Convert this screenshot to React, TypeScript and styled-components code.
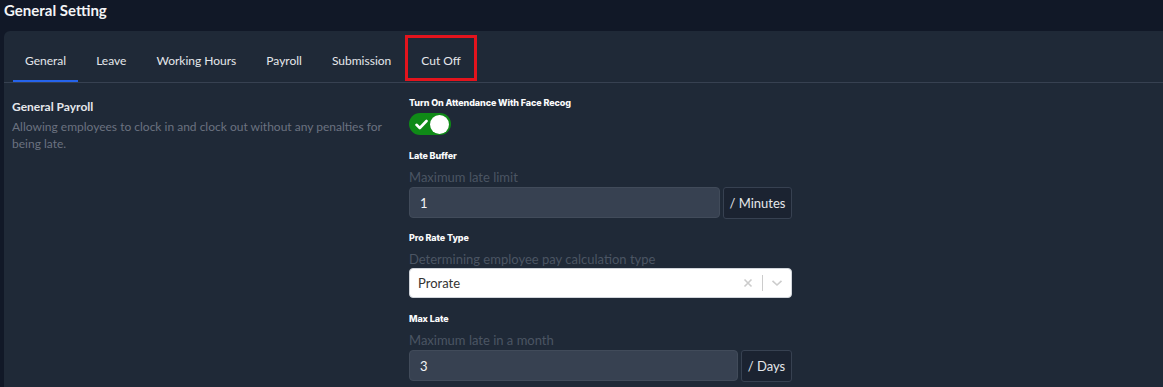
import React from 'react';
import styled, { createGlobalStyle, css } from 'styled-components';

const GlobalStyle = createGlobalStyle`
  html, body {
    margin: 0;
    padding: 0;
    background: #111827;
    overflow: hidden;
  }
  body {
    font-family: Lato, "Noto Sans", sans-serif;
    color: #e5e7eb;
  }
`;

const Page = styled.div`
  width: 1163px;
  height: 387px;
  overflow: hidden;
`;

const PageTitle = styled.h1`
  margin: 0;
  padding: 0 0 0 4px;
  height: 31px;
  font-size: 15px;
  font-weight: 700;
  line-height: 20px;
  color: #f3f4f6;
`;

const Card = styled.div`
  margin-left: 4px;
  width: 1180px;
  min-height: 400px;
  background: #1f2937;
  border-radius: 6px 0 0 0;
`;

const TabBar = styled.div`
  display: flex;
  gap: 6px;
  padding: 5px 0 0 9px;
  border-bottom: 1px solid #374151;
`;

const Tab = styled.button<{ $active?: boolean; $marked?: boolean }>`
  position: relative;
  height: 46px;
  padding: 5px 12px 0;
  background: transparent;
  border: none;
  border-bottom: 2px solid ${({ $active }) => ($active ? '#2563eb' : 'transparent')};
  font-family: Lato, "Noto Sans", sans-serif;
  font-size: 12px;
  color: #e5e7eb;
  cursor: pointer;

  ${({ $marked }) =>
    $marked &&
    css`
      &::after {
        content: '';
        position: absolute;
        top: -1px;
        bottom: -1px;
        left: -4px;
        right: -4px;
        border: 3px solid #e3141d;
      }
    `}
`;

const Content = styled.div`
  display: grid;
  grid-template-columns: 397px 383px;
  padding-left: 8px;
`;

const Intro = styled.div`
  padding-top: 16px;
`;

const SectionTitle = styled.div`
  font-size: 12px;
  font-weight: 700;
  line-height: 16px;
  color: #e5e7eb;
`;

const SectionText = styled.p`
  margin: 3px 0 0;
  width: 385px;
  font-size: 12px;
  line-height: 17px;
  color: #6b7280;
`;

const Fields = styled.div`
  width: 383px;
  display: flex;
  flex-direction: column;
  padding-top: 13px;
`;

const Field = styled.div<{ $gap?: number }>`
  display: flex;
  flex-direction: column;
  margin-bottom: ${({ $gap = 12 }) => $gap}px;
`;

const Label = styled.div`
  font-family: Inter, "Noto Sans", sans-serif;
  font-size: 9px;
  font-weight: 800;
  line-height: 14px;
  color: #f9fafb;
  letter-spacing: -0.1px;
`;

const Hint = styled.div`
  margin-top: 5px;
  font-size: 13px;
  line-height: 18px;
  color: #4b5563;
`;

const Toggle = styled.div`
  margin-top: 3px;
  width: 42px;
  height: 22px;
  border-radius: 11px;
  background: #0f8a17;
  display: flex;
  align-items: center;
  justify-content: space-between;
  padding: 0 2px 0 6px;
  box-sizing: border-box;
`;

const Knob = styled.span`
  width: 19px;
  height: 19px;
  border-radius: 50%;
  background: #ffffff;
`;

const InputGroup = styled.div`
  width: 383px;
  display: flex;
  gap: 3px;
  margin-top: 1px;
`;

const TextInput = styled.div<{ $width: number }>`
  width: ${({ $width }) => $width}px;
  height: 31px;
  box-sizing: border-box;
  padding: 0 10px;
  display: flex;
  align-items: center;
  background: #374151;
  border: 1px solid #414b5a;
  border-radius: 4px;
  font-size: 13px;
  color: #f3f4f6;
`;

const Addon = styled.div`
  flex: 1;
  height: 32px;
  box-sizing: border-box;
  display: flex;
  align-items: center;
  justify-content: center;
  background: #1b2331;
  border: 1px solid #374151;
  border-radius: 3px;
  font-size: 13px;
  color: #e5e7eb;
`;

const Select = styled.div`
  width: 383px;
  height: 30px;
  box-sizing: border-box;
  display: flex;
  align-items: center;
  background: #ffffff;
  border: 1px solid #d1d5db;
  border-radius: 4px;
  padding-left: 8px;
`;

const SelectValue = styled.span`
  flex: 1;
  min-width: 0;
  font-size: 13px;
  color: #333333;
`;

const SelectIcon = styled.span`
  width: 28px;
  flex: none;
  display: flex;
  align-items: center;
  justify-content: center;
  color: #cccccc;
`;

const SelectDivider = styled.span`
  width: 1px;
  height: 16px;
  flex: none;
  background: #cccccc;
`;

const tabs = ['General', 'Leave', 'Working Hours', 'Payroll', 'Submission', 'Cut Off'];

export default function App() {
  return (
    <Page>
      <GlobalStyle />
      <PageTitle>General Setting</PageTitle>
      <Card>
        <TabBar>
          {tabs.map((t, i) => (
            <Tab key={t} $active={i === 0} $marked={t === 'Cut Off'}>
              {t}
            </Tab>
          ))}
        </TabBar>
        <Content>
          <Intro>
            <SectionTitle>General Payroll</SectionTitle>
            <SectionText>
              Allowing employees to clock in and clock out without any penalties for being late.
            </SectionText>
          </Intro>
          <Fields>
            <Field $gap={14}>
              <Label>Turn On Attendance With Face Recog</Label>
              <Toggle>
                <svg width="13" height="11" viewBox="0 0 13 11">
                  <path d="M1.5 5.8 L4.8 9 L11.5 2" fill="none" stroke="#fff" strokeWidth="2.6" strokeLinecap="round" strokeLinejoin="round" />
                </svg>
                <Knob />
              </Toggle>
            </Field>
            <Field>
              <Label>Late Buffer</Label>
              <Hint>Maximum late limit</Hint>
              <InputGroup>
                <TextInput $width={311}>1</TextInput>
                <Addon>/ Minutes</Addon>
              </InputGroup>
            </Field>
            <Field $gap={14}>
              <Label>Pro Rate Type</Label>
              <Hint>Determining employee pay calculation type</Hint>
              <Select>
                <SelectValue>Prorate</SelectValue>
                <SelectIcon>
                  <svg width="10" height="10" viewBox="0 0 10 10">
                    <path d="M1.5 1.5 L8.5 8.5 M8.5 1.5 L1.5 8.5" stroke="currentColor" strokeWidth="1.6" />
                  </svg>
                </SelectIcon>
                <SelectDivider />
                <SelectIcon>
                  <svg width="12" height="8" viewBox="0 0 12 8">
                    <path d="M1.5 1.8 L6 6 L10.5 1.8" fill="none" stroke="currentColor" strokeWidth="1.6" />
                  </svg>
                </SelectIcon>
              </Select>
            </Field>
            <Field>
              <Label>Max Late</Label>
              <Hint>Maximum late in a month</Hint>
              <InputGroup>
                <TextInput $width={329}>3</TextInput>
                <Addon>/ Days</Addon>
              </InputGroup>
            </Field>
          </Fields>
        </Content>
      </Card>
    </Page>
  );
}
